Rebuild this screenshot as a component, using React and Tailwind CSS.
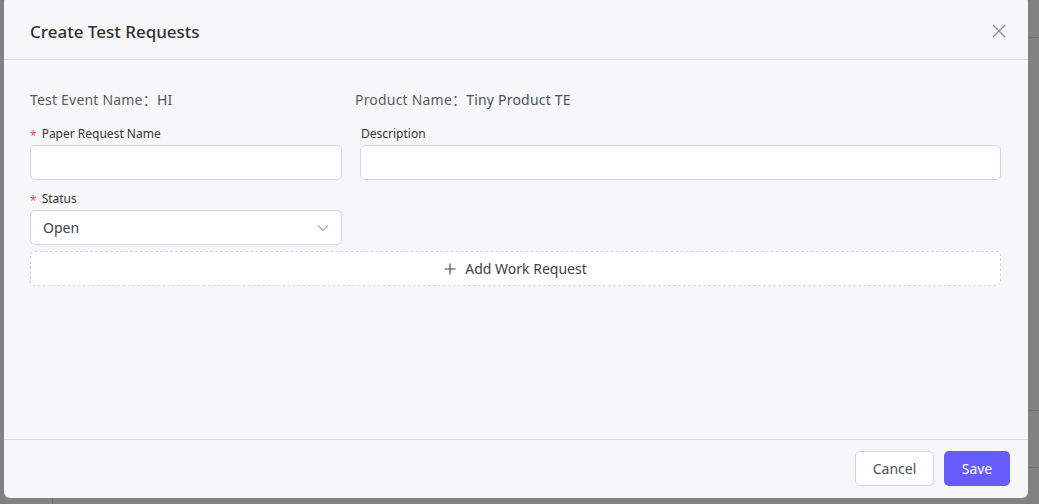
import React from "react";

const font = { fontFamily: '"Noto Sans", "Noto Sans CJK SC", sans-serif' };

export default function App() {
  return (
    <div className="relative w-[1039px] h-[504px] overflow-hidden bg-[#828282]" style={font}>
      {/* background page hints */}
      <div className="absolute right-0 top-[37px] w-[12px] h-px bg-[#747474]" />
      <div className="absolute right-0 top-[410px] w-[12px] h-px bg-[#747474]" />
      <div className="absolute right-0 top-[467px] w-[12px] h-px bg-[#747474]" />
      <div className="absolute left-[52px] top-[498px] w-px h-[6px] bg-[#6e6e6e]" />

      {/* modal */}
      <div className="absolute left-[4px] top-[-4px] w-[1024px] h-[502px] rounded-[6px] bg-[#f7f7f9] flex flex-col">
        <div className="h-[64px] flex items-center justify-between pl-[26px] pr-[22px] pt-[8px] border-b border-[#d5d8df]">
          <div className="text-[17px] font-medium text-[#303133]">Create Test Requests</div>
          <svg width="14" height="14" viewBox="0 0 14 14" className="-mt-[2px]">
            <path d="M1 1 L13 13 M13 1 L1 13" stroke="#8a8d93" strokeWidth="1.3" fill="none" />
          </svg>
        </div>

        <div className="flex-1 pl-[26px] pr-[27px] pt-[30px]">
          <div className="flex text-[14px] text-[#5a5c60] leading-[20px] tracking-[0.2px]">
            <div className="w-[325px]">
              Test Event Name：<span className="text-[#4a5366]">HI</span>
            </div>
            <div>
              Product Name：<span className="text-[#4a5366]">Tiny Product TE</span>
            </div>
          </div>

          <div className="flex gap-[18px] mt-[16px]">
            <div className="w-[312px]">
              <div className="flex items-center text-[12px] text-[#333] leading-[16px] h-[16px]">
                <span className="text-[#f5484d] mr-[5px] text-[12px] mt-[3px]">*</span>Paper Request Name
              </div>
              <div className="mt-[3px] h-[35px] rounded-[5px] border border-[#d3d7df] bg-white" />
            </div>
            <div className="flex-1">
              <div className="text-[12px] text-[#333] leading-[16px] h-[16px] pl-[1px]">Description</div>
              <div className="mt-[3px] h-[35px] rounded-[5px] border border-[#d3d7df] bg-white" />
            </div>
          </div>

          <div className="w-[312px] mt-[11px]">
            <div className="flex items-center text-[12px] text-[#333] leading-[16px] h-[16px]">
              <span className="text-[#f5484d] mr-[5px] text-[12px] mt-[3px]">*</span>Status
            </div>
            <div className="mt-[3px] h-[35px] rounded-[5px] border border-[#d3d7df] bg-white flex items-center justify-between pl-[12px] pr-[12px]">
              <span className="text-[14px] text-[#3c4150]">Open</span>
              <svg width="12" height="8" viewBox="0 0 12 8">
                <path d="M1 1.5 L6 6.5 L11 1.5" stroke="#a3a6ad" strokeWidth="1.1" fill="none" />
              </svg>
            </div>
          </div>

          <div className="mt-[6px] h-[35px] rounded-[5px] border border-dashed border-[#d3d7df] bg-white flex items-center justify-center gap-[9px] text-[14px] text-[#3c4150]">
            <svg width="12" height="12" viewBox="0 0 12 12">
              <path d="M6 0.5 V11.5 M0.5 6 H11.5" stroke="#3c4150" strokeWidth="1.1" fill="none" />
            </svg>
            <span>Add Work Request</span>
          </div>
        </div>

        <div className="h-[59px] border-t border-[#d5d8df] flex items-center justify-end gap-[10px] pr-[18px] pb-[1px]">
          <button className="h-[35px] w-[79px] rounded-[5px] border border-[#d3d7df] bg-white text-[14px] text-[#4a4f5a]">Cancel</button>
          <button className="h-[35px] w-[66px] rounded-[5px] bg-[#655cfb] text-[14px] text-white">Save</button>
        </div>
      </div>
    </div>
  );
}
